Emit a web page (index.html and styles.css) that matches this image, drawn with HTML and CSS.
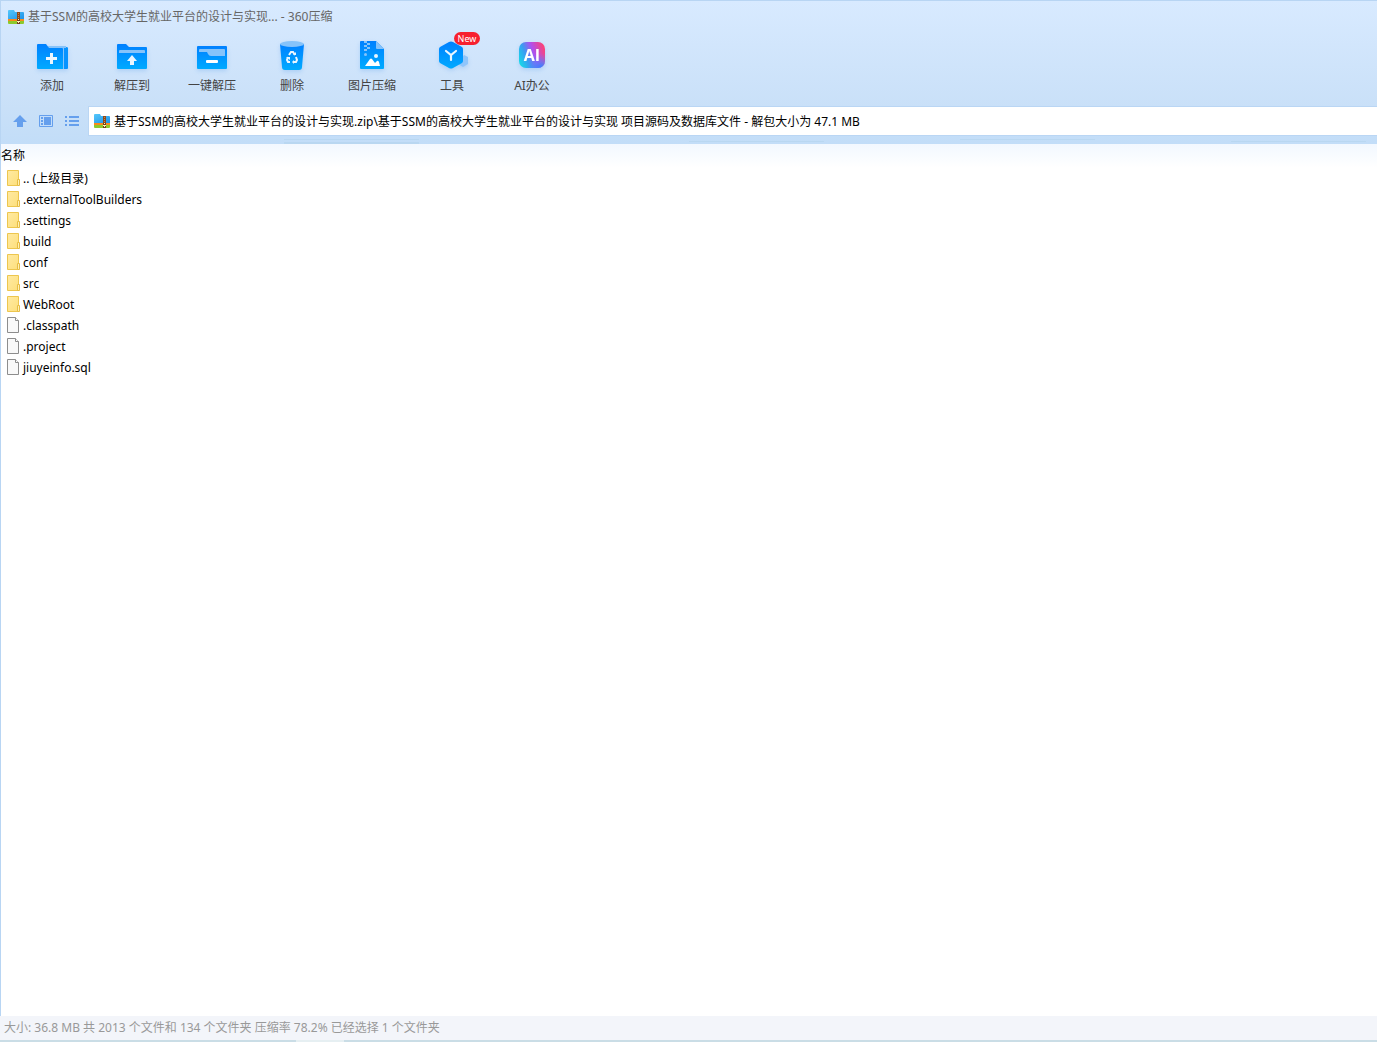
FILE: index.html
```html
<!DOCTYPE html>
<html lang="zh-CN">
<head>
<meta charset="utf-8">
<title>360压缩</title>
<link rel="stylesheet" href="styles.css">
</head>
<body>
<svg class="defs" aria-hidden="true">
  <defs>
    <linearGradient id="blue" x1="0" y1="0" x2="0" y2="1"><stop offset="0" stop-color="#0080ff"/><stop offset="1" stop-color="#00aaff"/></linearGradient>
    <linearGradient id="sky" x1="0" y1="0" x2="1" y2="1"><stop offset="0" stop-color="#55c8fb"/><stop offset="1" stop-color="#1e92e8"/></linearGradient>
    <linearGradient id="yellow" x1="0" y1="0" x2="1" y2="1"><stop offset="0" stop-color="#ffeaa3"/><stop offset="1" stop-color="#fddf7b"/></linearGradient>
    <linearGradient id="ai" x1="0" y1="0.7" x2="1" y2="0.3"><stop offset="0" stop-color="#18d5e8"/><stop offset="0.3" stop-color="#3a9cf2"/><stop offset="0.6" stop-color="#b050ee"/><stop offset="1" stop-color="#fb4378"/></linearGradient>
    <radialGradient id="aiCorner" cx="0.85" cy="1" r="0.55"><stop offset="0" stop-color="#2d86ff"/><stop offset="1" stop-color="#5a86ff" stop-opacity="0"/></radialGradient>
    <symbol id="archive" viewBox="0 0 16 16">
      <path d="M0 2Q0 1 1 1h5l1 2h8q1 0 1 1v6H0z" fill="url(#sky)"/>
      <path d="M0 10h16v2H0z" fill="#f98a1c"/>
      <path d="M0 12h16v2q0 1-1 1H1q-1 0-1-1z" fill="#8cc92d"/>
      <path d="M9 3h3v8H9z" fill="#8d4a1c"/><path d="M10 4h1v1h-1zm0 2h1v1h-1zm0 2h1v1h-1z" fill="#c98648"/>
      <path d="M9 10h3v5H9z" fill="#714019"/><path d="M10 10h1v1h-1zM9 12h3v1H9zM10 13h1v1h-1z" fill="#fff2bb"/>
    </symbol>
    <symbol id="folder" viewBox="0 0 14 18">
      <path d="M.5 .5h11v15H.5z" fill="url(#yellow)" stroke="#edc64e"/><path d="M10.500 9.500h2v6h-2z" fill="#fff0b4" stroke="#e6bd45"/>
    </symbol>
    <symbol id="file" viewBox="0 0 14 18">
      <path d="M.5 .5h8l3 3v12H.5z" fill="#f9f9f9" stroke="#8d8d8d"/><path d="M8.500 .5v3h3" fill="#fff" stroke="#8d8d8d"/>
    </symbol>
  </defs>
</svg>
<div class="window">
  <header class="chrome">
    <h1 class="title"><svg class="icon-16"><use href="#archive"/></svg>基于SSM的高校大学生就业平台的设计与实现... - 360压缩</h1>
    <nav class="toolbar">
      <button class="tool" type="button">
        <svg class="tool-icon" viewBox="0 0 34 34"><path d="M13 6h18v23H13z" fill="#86c3fa"/><path d="M31 7q2 0 2 1v20q0 1-1 1h-3V8h2z" fill="#0793ff"/><path d="M2 5q0-1 1-1h8l3 4h13q1 0 1 1v20H3q-1 0-1-1z" fill="url(#blue)"/><path d="M15 13h3v4h4v3h-4v4h-3v-4h-4v-3h4z" fill="#eaf6ff"/></svg>
        <span>添加</span></button>
      <button class="tool" type="button">
        <svg class="tool-icon" viewBox="0 0 34 34"><path d="M2 5q0-1 1-1h8l3 3h17q1 0 1 1v20q0 1-1 1H3q-1 0-1-1z" fill="url(#blue)"/><path d="M4 13v-2q0-1 1-1h24q1 0 1 1v2z" fill="#86c3fa"/><path d="M17 15l5 6h-3v4h-4v-4h-3z" fill="#eaf6ff"/></svg>
        <span>解压到</span></button>
      <button class="tool" type="button">
        <svg class="tool-icon" viewBox="0 0 34 34"><path d="M2 7q0-1 1-1h28q1 0 1 1v21q0 1-1 1H3q-1 0-1-1z" fill="url(#blue)"/><path d="M4 12v-2q0-1 1-1h24q1 0 1 1v6H16q-2 0-3-2l-1-2z" fill="#86c3fa"/><rect x="11" y="20" width="12" height="3" rx="1" fill="#fff"/></svg>
        <span>一键解压</span></button>
      <button class="tool" type="button">
        <svg class="tool-icon" viewBox="0 0 34 34"><path d="M5 4h24l-2 23q0 3-3 3H10q-3 0-3-3z" fill="url(#blue)"/><ellipse cx="17" cy="4" rx="12" ry="3" fill="#86c3fa"/><g fill="none" stroke="#eaf6ff" stroke-width="2"><path d="M14 15l2-3h2l2 3M21 17l1 3-1 2h-3M15 22h-2l-1-2 1-3"/></g><path d="M18 15h3v-3zM19 20v4l-2-2zM11 17h4v3z" fill="#eaf6ff"/></svg>
        <span>删除</span></button>
      <button class="tool" type="button">
        <svg class="tool-icon" viewBox="0 0 34 34"><path d="M5 2q0-1 1-1h15l8 8v19q0 1-1 1H6q-1 0-1-1z" fill="url(#blue)"/><path d="M21 1v7q0 1 1 1h7z" fill="#86c3fa"/><path d="M9 1h3v2H9zm3 2h3v2h-3zM9 5h3v2H9zm3 2h3v2h-3zM9 9h3v2H9z" fill="#86c3fa"/><circle cx="10.500" cy="14.500" r="1.500" fill="#86c3fa"/><circle cx="21" cy="16" r="2" fill="#eaf6ff"/><path d="M10 26l5-7q1-1 2 0l3 4 2-2q1-1 2 1l1 4z" fill="#fff"/></svg>
        <span>图片压缩</span></button>
      <button class="tool" type="button">
        <svg class="tool-icon" viewBox="0 0 34 34"><path d="M29 15l4 2v7l-5 3-5-3z" fill="#8fc5fb"/><path d="M14 2q2-1.200 4 0l9 5q1 1 1 2v12q0 1-1 2l-9 5q-2 1.200-4 0l-9-5q-1-1-1-2V9q0-1 1-2z" fill="url(#blue)"/><path d="M11 11l5 4 5-4M16 15v5" fill="none" stroke="#eaf6ff" stroke-width="2.200" stroke-linecap="round"/></svg>
        <span>工具</span><span class="badge">New</span></button>
      <button class="tool" type="button">
        <svg class="tool-icon" viewBox="0 0 34 34"><rect x="4" y="2" width="26" height="26" rx="7" fill="url(#ai)"/><rect x="4" y="2" width="26" height="26" rx="7" fill="url(#aiCorner)"/><text class="ai-mark" x="17" y="21" text-anchor="middle">AI</text></svg>
        <span>AI办公</span></button>
    </nav>
    <div class="address-row">
      <button class="mini" type="button" aria-label="上级目录"><svg class="icon-16" viewBox="0 0 16 16"><path d="M8 2l7 7h-4v5H5V9H1z" fill="#659fed"/></svg></button>
      <button class="mini" type="button" aria-label="预览"><svg class="icon-16" viewBox="0 0 16 16"><path d="M1.500 2.500h13v11h-13z" fill="#c3ddfa" stroke="#659fed"/><path d="M6 4h7v8H6zM3 4h2v2H3zM3 7h2v2H3zM3 10h2v2H3z" fill="#659fed"/></svg></button>
      <button class="mini" type="button" aria-label="列表"><svg class="icon-16" viewBox="0 0 16 16"><path d="M1 3h2v2H1zM5 3h10v2H5zM1 7h2v2H1zM5 7h10v2H5zM1 11h2v2H1zM5 11h10v2H5z" fill="#659fed"/></svg></button>
      <label class="address"><svg class="icon-16"><use href="#archive"/></svg><input type="text" aria-label="路径" value="基于SSM的高校大学生就业平台的设计与实现.zip\基于SSM的高校大学生就业平台的设计与实现 项目源码及数据库文件 - 解包大小为 47.1 MB"></label>
    </div>
  </header>
  <main class="listing">
    <table class="files">
      <thead><tr><th scope="col">名称</th></tr></thead>
      <tbody>
        <tr><td><svg class="file-icon"><use href="#folder"/></svg>.. (上级目录)</td></tr>
        <tr><td><svg class="file-icon"><use href="#folder"/></svg>.externalToolBuilders</td></tr>
        <tr><td><svg class="file-icon"><use href="#folder"/></svg>.settings</td></tr>
        <tr><td><svg class="file-icon"><use href="#folder"/></svg>build</td></tr>
        <tr><td><svg class="file-icon"><use href="#folder"/></svg>conf</td></tr>
        <tr><td><svg class="file-icon"><use href="#folder"/></svg>src</td></tr>
        <tr><td><svg class="file-icon"><use href="#folder"/></svg>WebRoot</td></tr>
        <tr><td><svg class="file-icon"><use href="#file"/></svg>.classpath</td></tr>
        <tr><td><svg class="file-icon"><use href="#file"/></svg>.project</td></tr>
        <tr><td><svg class="file-icon"><use href="#file"/></svg>jiuyeinfo.sql</td></tr>
      </tbody>
    </table>
  </main>
  <footer class="status">大小: 36.8 MB 共 2013 个文件和 134 个文件夹 压缩率 78.2% 已经选择 1 个文件夹</footer>
</div>
</body>
</html>
```
FILE: styles.css
```css
* { box-sizing: border-box; }
body {
  margin: 0;
  font: 12px/20px "Noto Sans", "Noto Sans CJK SC", sans-serif;
  color: #000;
}
button, input { font: inherit; color: inherit; border: 0; background: none; padding: 0; }
svg { display: block; flex: none; }
.defs { position: absolute; width: 0; height: 0; }
.window { min-height: 100vh; display: flex; flex-direction: column; background: #fff; }
.chrome {
  --streak: linear-gradient(#b9d7f1, #b9d7f1);
  border-top: 1px solid #b8d5f3;
  border-left: 1px solid #b8d5f3;
  background:
    var(--streak) 283px 100% / 135px 2px no-repeat,
    var(--streak) 283px calc(100% - 4px) / 135px 1px no-repeat,
    var(--streak) 688px calc(100% - 2px) / 135px 1px no-repeat,
    var(--streak) 959px calc(100% - 4px) / 135px 1px no-repeat,
    var(--streak) 1230px calc(100% - 2px) / 135px 1px no-repeat,
    linear-gradient(#d8eaff, #c9e0f8 75%, #c2ddf8);
}
.icon-16 { width: 16px; height: 16px; }
.title {
  display: flex;
  align-items: center;
  gap: 4px;
  height: 31px;
  margin: 0;
  padding-left: 7px;
  font-size: 12px;
  font-weight: 400;
  color: #666;
}
.toolbar { display: flex; height: 72px; padding-left: 11px; }
.tool {
  position: relative;
  width: 80px;
  padding-top: 8px;
  display: flex;
  flex-direction: column;
  align-items: center;
  gap: 2px;
  color: #444;
}
.tool-icon { width: 34px; height: 34px; filter: drop-shadow(0 2px 2px rgb(40 130 230 / 20%)); }
.badge {
  position: absolute;
  top: 0;
  left: 42px;
  width: 26px;
  border-radius: 7px;
  background: #f7202e;
  color: #fff;
  font-size: 9px;
  line-height: 13px;
  text-align: center;
}
.ai-mark { font: 700 16px "Open Sans", sans-serif; fill: #fff; }
.address-row { display: flex; align-items: center; height: 40px; padding: 0 0 6px 6px; }
.mini { width: 26px; height: 26px; display: grid; place-items: center; }
.address {
  flex: 1;
  display: flex;
  align-items: center;
  gap: 4px;
  height: 30px;
  margin-left: 3px;
  padding-left: 5px;
  border: 1px solid #bad6f4;
  border-right: 0;
  background: #fff;
}
.address input { flex: 1; min-width: 0; height: 24px; outline: 0; }
.listing { flex: 1; border-left: 1px solid #b8d5f3; }
.files { width: 100%; border-collapse: collapse; }
.files th {
  height: 24px;
  padding: 0;
  text-align: left;
  font-weight: 400;
  background: linear-gradient(#f2f8ff, #fff);
}
.files td { display: flex; align-items: center; gap: 2px; height: 21px; padding: 0 0 0 6px; }
.file-icon { width: 14px; height: 18px; }
.status {
  height: 26px;
  padding: 2px 4px;
  background:
    linear-gradient(#e6eff2, #e6eff2) 296px 100% / 48px 2px no-repeat,
    linear-gradient(#cadde6, #cadde6) 0 100% / 100% 2px no-repeat,
    #f3f5fa;
  color: #999;
}
```
